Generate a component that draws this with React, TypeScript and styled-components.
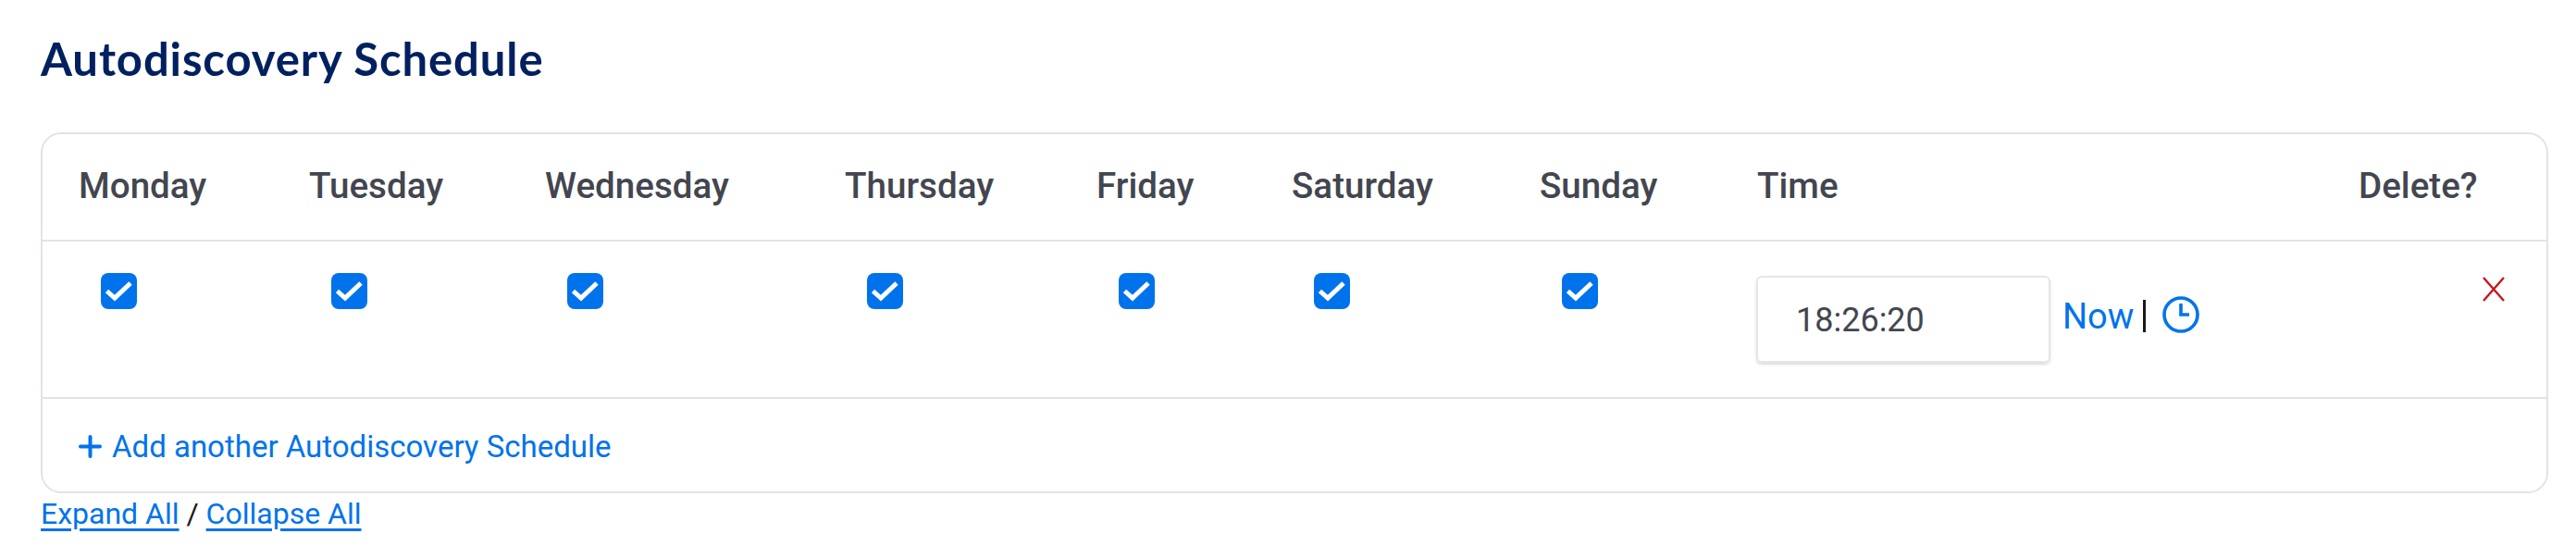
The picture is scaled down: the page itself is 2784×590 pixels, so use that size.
import React from 'react';
import styled, { createGlobalStyle } from 'styled-components';

const GlobalStyle = createGlobalStyle`
  html, body { margin: 0; padding: 0; background: #fff; }
  body { font-family: "Roboto", "Liberation Sans", sans-serif; }
`;

const Page = styled.div`
  width: 2784px;
  height: 590px;
  padding: 33px 30px 0 44px;
  box-sizing: border-box;
  overflow: hidden;
`;

const Title = styled.h2`
  margin: 0 0 50px;
  font-family: "Lato", sans-serif;
  font-size: 49px;
  line-height: 60px;
  font-weight: 700;
  letter-spacing: 0.9px;
  color: #00205f;
`;

const Card = styled.div`
  width: 2710px;
  height: 390px;
  border: 2px solid #e0e3e8;
  border-radius: 22px;
  box-sizing: border-box;
`;

const Row = styled.div<{ $h: number }>`
  display: grid;
  grid-template-columns: 249px 255px 324px 272px 211px 268px 235px 650px 1fr;
  height: ${(p) => p.$h}px;
  border-bottom: 2px solid #e0e3e8;
  box-sizing: border-box;
  padding-left: 39px;
`;

const Head = styled.div`
  font-size: 38.6px;
  font-weight: 500;
  color: #43464f;
  line-height: 112px;
`;

const CheckCell = styled.div`
  padding: 34px 0 0 24px;
`;

const Check = styled.span`
  display: flex;
  width: 39px;
  height: 39px;
  border-radius: 8px;
  background: #0073ec;
`;

const TimeCell = styled.div`
  display: flex;
  align-items: flex-start;
  padding-top: 37px;
`;

const TimeBox = styled.div`
  width: 318px;
  height: 94px;
  flex: none;
  margin-left: -1px;
  border: 2px solid #e6e6e8;
  border-radius: 6px;
  box-sizing: border-box;
  padding-left: 41px;
  font-size: 36px;
  line-height: 92px;
  color: #43464f;
  box-shadow: 0 2px 3px rgba(0, 0, 0, 0.14);
`;

const NowLink = styled.span`
  margin: 21px 0 0 13px;
  font-size: 38px;
  line-height: 46px;
  color: #0073ec;
`;

const Bar = styled.span`
  width: 3px;
  height: 35px;
  margin: 26px 18px 0 10px;
  background: #1a1a1a;
`;

const ClockIcon = styled.svg`
  margin-top: 22px;
  flex: none;
`;

const DeleteCell = styled.div`
  padding: 38px 0 0 134px;
`;

const AddRow = styled.div`
  display: flex;
  align-items: center;
  gap: 11px;
  height: 100px;
  padding: 3px 0 0 39px;
  box-sizing: border-box;
  font-size: 33px;
  color: #0073ec;
`;

const Footer = styled.div`
  font-size: 32px;
  line-height: 44px;
  color: #1a1a1a;
`;

const FooterLink = styled.a`
  color: #0073ec;
  text-decoration: underline;
  text-decoration-thickness: 3px;
  text-underline-offset: 5px;
`;

const days = ['Monday', 'Tuesday', 'Wednesday', 'Thursday', 'Friday', 'Saturday', 'Sunday'];

export default function App() {
  return (
    <Page>
      <GlobalStyle />
      <Title>Autodiscovery Schedule</Title>
      <Card>
        <Row $h={116}>
          {days.map((d) => (
            <Head key={d}>{d}</Head>
          ))}
          <Head>Time</Head>
          <Head>Delete?</Head>
        </Row>
        <Row $h={170}>
          {days.map((d) => (
            <CheckCell key={d}>
              <Check>
                <svg width="39" height="39" viewBox="0 0 39 39" fill="none" stroke="#fff" strokeWidth="5">
                  <path d="M6.5 19.5L15 27L32 11" />
                </svg>
              </Check>
            </CheckCell>
          ))}
          <TimeCell>
            <TimeBox>18:26:20</TimeBox>
            <NowLink>Now</NowLink>
            <Bar />
            <ClockIcon width="40" height="40" viewBox="0 0 40 40" fill="none" stroke="#0073ec" strokeWidth="3.6">
              <circle cx="20" cy="20" r="18" />
              <path d="M20 8v12h9" />
            </ClockIcon>
          </TimeCell>
          <DeleteCell>
            <svg width="24" height="27" viewBox="0 0 24 27" fill="none" stroke="#c9151b" strokeWidth="2.4">
              <path d="M1 1l22 25M23 1L1 26" />
            </svg>
          </DeleteCell>
        </Row>
        <AddRow>
          <svg width="25" height="25" viewBox="0 0 25 25" fill="none" stroke="#0073ec" strokeWidth="4" strokeLinecap="round">
            <path d="M12.5 2v21M2 12.5h21" />
          </svg>
          Add another Autodiscovery Schedule
        </AddRow>
      </Card>
      <Footer>
        <FooterLink>Expand All</FooterLink> / <FooterLink>Collapse All</FooterLink>
      </Footer>
    </Page>
  );
}
